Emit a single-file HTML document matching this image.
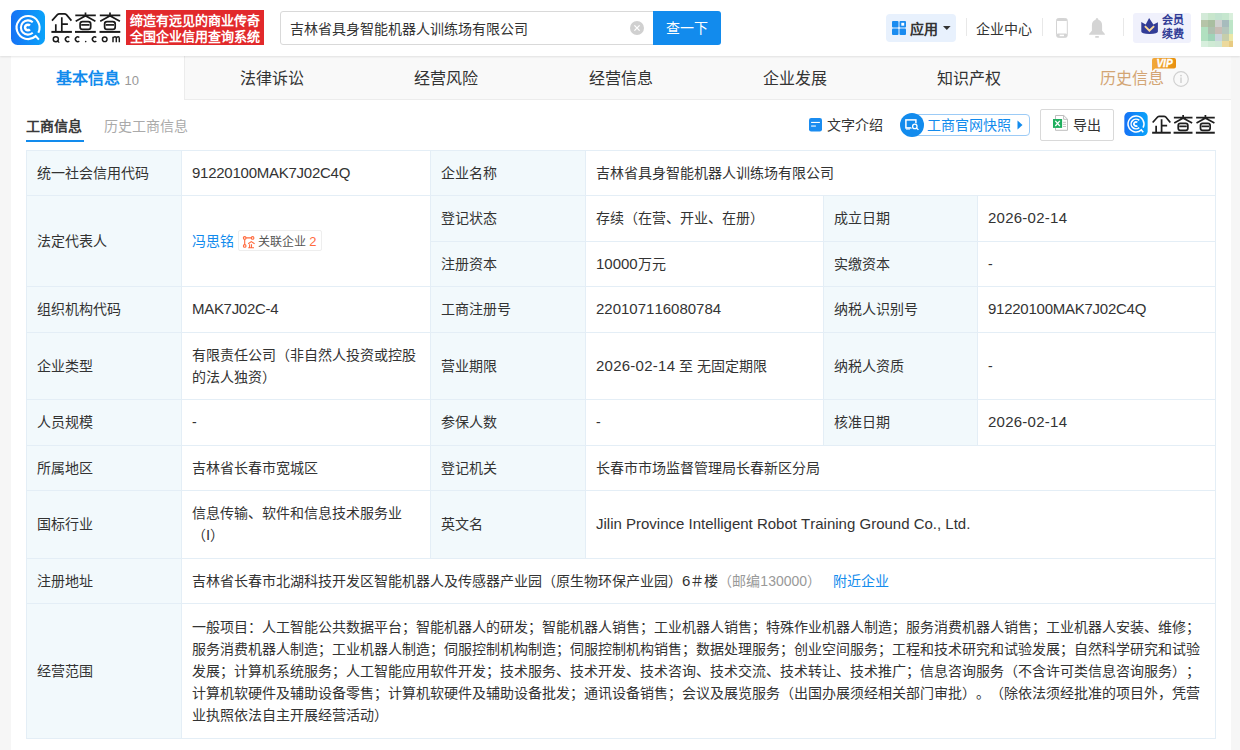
<!DOCTYPE html>
<html lang="zh-CN"><head><meta charset="utf-8">
<style>
*{margin:0;padding:0;box-sizing:border-box;}
html,body{text-spacing-trim:space-all;font-kerning:none;width:1240px;height:750px;overflow:hidden;background:#f6f6f6;font-family:"Liberation Sans",sans-serif;color:#333;}
.abs{position:absolute;}
svg{position:absolute;overflow:visible;}
#hdr{position:absolute;left:0;top:0;width:1240px;height:56px;background:#fff;box-shadow:0 1px 2px rgba(0,0,0,0.10);z-index:5;}
#card{position:absolute;left:11px;top:56px;width:1220px;height:700px;background:#fff;}
.tb{position:absolute;top:68px;font-size:16px;line-height:22px;color:#333;white-space:nowrap;}
.t{position:absolute;white-space:nowrap;font-size:14px;line-height:22px;color:#333;}
.c{position:absolute;display:flex;align-items:center;}
.ct{padding-left:11px;font-size:14px;line-height:22px;white-space:nowrap;color:#333;}
.num{font-family:"Liberation Sans",sans-serif;font-size:15px;}
.hl{position:absolute;height:1px;background:#e4eef6;}
.vl{position:absolute;width:1px;background:#e4eef6;}
</style></head>
<body>
<div id="hdr">
  <!-- logo icon -->
  <svg style="left:11px;top:10px" width="34" height="35" viewBox="0 0 34 35">
    <defs><linearGradient id="lg1" x1="0" y1="0" x2="1" y2="0"><stop offset="0" stop-color="#1672f5"/><stop offset="1" stop-color="#0aa3fa"/></linearGradient></defs>
    <rect x="0" y="0" width="34" height="35" rx="6.5" fill="url(#lg1)"/>
    <g fill="none" stroke="#fff" stroke-width="2.1">
      <path d="M27.34 22.77 A11.5 11.5 0 1 0 24.76 26.12 L27.9 29.6"/>
      <path d="M21.75 12.22 A7.1 7.1 0 1 0 21.75 22.78"/>
      <path d="M18.9 15.6 A2.8 2.8 0 1 0 18.9 19.4" stroke-width="2.5"/>
    </g>
  </svg>
  <!-- logo text -->
  <svg style="left:48px;top:8px" width="76" height="38" viewBox="0 0 76 38">
    <g fill="none" stroke="#1a1a1a" stroke-width="1.7" stroke-linecap="butt">
      <path d="M4 12.6 L9.4 6.6 Q10.2 5.8 11.4 5.8 L16.4 5.8 Q17.6 5.8 18.4 6.6 L23.4 12.6"/>
      <path d="M13.8 9.2 V23.4 M13.8 16.1 H19.9 M7.8 16.2 V23.4"/>
      <path d="M3.4 23.9 H23.9" stroke-width="2"/>
      <g id="cha">
        <path d="M27.3 7.3 H47.8 M37.5 4.4 V8.2 M37.2 8 L27.7 13.2 M37.8 8 L47.4 13.2"/>
        <rect x="32.1" y="13.6" width="10.6" height="7.7" rx="2.4"/>
        <path d="M33.2 16.9 H41.5"/>
        <path d="M27 23.9 H47.8" stroke-width="2"/>
      </g>
      <use href="#cha" x="24.5"/>
      <!-- Qcc.com -->
      <g stroke-width="1.45">
        <circle cx="7.8" cy="31.2" r="2.55"/>
        <path d="M9.2 32.6 L11.2 34.6" stroke-width="1.3"/>
        <path d="M21.3 29.6 A2.3 2.3 0 1 0 21.3 32.9"/>
        <path d="M31.3 29.6 A2.3 2.3 0 1 0 31.3 32.9"/>
        <path d="M48.3 29.6 A2.3 2.3 0 1 0 48.3 32.9"/>
        <circle cx="56.7" cy="31.3" r="2.35"/>
        <path d="M65 34.3 V28.7 M65 30.2 Q65.8 28.7 67 28.7 Q68.3 28.7 68.3 30.4 V34.3 M68.3 30.2 Q69 28.7 70.2 28.7 Q71.3 28.7 71.3 30.4 V34.3"/>
      </g>
      <circle cx="37.7" cy="33.6" r="0.8" fill="#1f1f1f" stroke="none"/>
    </g>
  </svg>
  <div class="abs" style="left:126px;top:10px;width:138px;height:35px;background:#e2292b;color:#fff;font-weight:bold;font-size:13px;line-height:16px;padding:3px 0 0 4px;white-space:nowrap;">缔造有远见的商业传奇<br>全国企业信用查询系统</div>
  <!-- search -->
  <div class="abs" style="left:280px;top:11px;width:374px;height:34px;border:1px solid #d9d9d9;border-radius:3px 0 0 3px;"></div>
  <div class="abs" style="left:290px;top:18px;font-size:14px;line-height:22px;color:#333;white-space:nowrap;">吉林省具身智能机器人训练场有限公司</div>
  <svg style="left:630px;top:21px" width="14" height="14" viewBox="0 0 14 14"><circle cx="7" cy="7" r="7" fill="#d0d0d0"/><path d="M4.4 4.4 L9.6 9.6 M9.6 4.4 L4.4 9.6" stroke="#fff" stroke-width="1.3"/></svg>
  <div class="abs" style="left:653px;top:11px;width:68px;height:34px;background:#128bed;border-radius:0 3px 3px 0;color:#fff;font-size:14px;line-height:35px;text-align:center;">查一下</div>
  <!-- right -->
  <div class="abs" style="left:886px;top:14px;width:70px;height:28px;background:#e8f1fd;border-radius:4px;"></div>
  <svg style="left:892px;top:21px" width="14" height="14" viewBox="0 0 14 14">
    <rect x="0" y="0" width="6.5" height="6.5" rx="1" fill="#1a8cf0"/>
    <rect x="7.5" y="0" width="6.5" height="6.5" rx="1" fill="#1a8cf0"/>
    <rect x="9.3" y="1.8" width="2.9" height="2.9" fill="#fff"/>
    <rect x="0" y="7.5" width="6.5" height="6.5" rx="1" fill="#1a8cf0"/>
    <rect x="7.5" y="7.5" width="6.5" height="6.5" rx="1" fill="#1a8cf0"/>
  </svg>
  <div class="abs" style="left:910px;top:18px;font-size:14px;line-height:22px;font-weight:bold;color:#333;">应用</div>
  <svg style="left:943px;top:26px" width="8" height="4" viewBox="0 0 8 4"><path d="M0 0 H7.6 L3.8 3.9 Z" fill="#333"/></svg>
  <div class="abs" style="left:966px;top:18px;width:1px;height:18px;background:#e8e8e8;"></div>
  <div class="abs" style="left:976px;top:18px;font-size:14px;line-height:22px;color:#333;">企业中心</div>
  <div class="abs" style="left:1042px;top:18px;width:1px;height:18px;background:#e8e8e8;"></div>
  <svg style="left:1056px;top:18px" width="12" height="20" viewBox="0 0 12 20">
    <rect x="0.5" y="0.5" width="10.8" height="18.8" rx="2.6" fill="none" stroke="#d4d4d4" stroke-width="1"/>
    <rect x="0.5" y="0.5" width="10.8" height="2.4" rx="1" fill="#d4d4d4"/>
    <rect x="0.5" y="15.4" width="10.8" height="4" rx="1.5" fill="#d4d4d4"/>
    <rect x="3.6" y="16.7" width="4.4" height="1.5" fill="#fff"/>
  </svg>
  <svg style="left:1089px;top:18px" width="16" height="20" viewBox="0 0 16 20">
    <path d="M8 0 C8.8 0 9.2 0.8 9.4 1.7 C11.8 2.4 13.1 4.5 13.1 7.2 V12.8 L15.9 16 V16.8 H0.1 V16 L2.9 12.8 V7.2 C2.9 4.5 4.2 2.4 6.6 1.7 C6.8 0.8 7.2 0 8 0 Z" fill="#d4d4d4"/>
    <rect x="6.2" y="18" width="3.7" height="1.7" rx="0.5" fill="#d4d4d4"/>
  </svg>
  <div class="abs" style="left:1123px;top:18px;width:1px;height:18px;background:#e8e8e8;"></div>
  <div class="abs" style="left:1133px;top:13px;width:58px;height:30px;background:#f0f1fc;border-radius:3px;"></div>
  <svg style="left:1141px;top:18.4px" width="17" height="16" viewBox="0 0 17 16">
    <path d="M0.3 3.9 L4.7 6.6 L8.1 0 L12.4 6.6 L16.9 4.2 V13.6 Q16.9 16 8.6 16 Q0.3 16 0.3 13.6 Z" fill="#323c96"/>
    <path d="M3.9 8.1 L8.4 12.6 L13.1 8.1" fill="none" stroke="#fcd99a" stroke-width="2"/>
  </svg>
  <div class="abs" style="left:1162px;top:14px;font-size:11px;line-height:13.5px;font-weight:bold;color:#323c96;white-space:nowrap;">会员<br>续费</div>
  <!-- avatar -->
  <div class="abs" style="left:1201px;top:13px;width:32px;height:34px;display:grid;grid-template-columns:7px 7px 7px 7px 4px;grid-template-rows:7px 7px 7px 7px 6px;filter:blur(0.4px);">
    <div style="background:#d3ead8"></div><div style="background:#c8e6cc"></div><div style="background:#c2e3cf"></div><div style="background:#c6e7cf"></div><div style="background:#d9efdc"></div>
    <div style="background:#b6c4a8"></div><div style="background:#a9bea0"></div><div style="background:#cfd0cf"></div><div style="background:#a7bcbd"></div><div style="background:#bde5c7"></div>
    <div style="background:#b1e0c0"></div><div style="background:#adbfaf"></div><div style="background:#c7bcb5"></div><div style="background:#b4c6bc"></div><div style="background:#bde5c7"></div>
    <div style="background:#b1e0c0"></div><div style="background:#9fd3b8"></div><div style="background:#c9d4dc"></div><div style="background:#c6ceab"></div><div style="background:#ebe7a8"></div>
    <div style="background:#d7efdd"></div><div style="background:#cfead4"></div><div style="background:#cfe6d6"></div><div style="background:#ecd99c"></div><div style="background:#e8cb82"></div>
  </div>
</div>

<div id="card">
  <div class="abs" style="left:0;top:0;width:1220px;height:44px;background:#f9f9f9;border-bottom:1px solid #ececec;"></div>
  <div class="abs" style="left:0;top:0;width:174px;height:44px;background:#fff;border-right:1px solid #ececec;"></div>
</div>

<!-- tabs -->
<div class="tb" style="left:56px;color:#128bed;font-weight:bold;">基本信息 <span style="font-size:13px;color:#999;font-weight:normal;position:relative;top:1px;">10</span></div>
<div class="tb" style="left:240px;">法律诉讼</div>
<div class="tb" style="left:414px;">经营风险</div>
<div class="tb" style="left:589px;">经营信息</div>
<div class="tb" style="left:763px;">企业发展</div>
<div class="tb" style="left:937px;">知识产权</div>
<div class="tb" style="left:1100px;color:#d3a574;">历史信息</div>
<svg style="left:1152px;top:58px" width="24" height="13" viewBox="0 0 24 13">
  <defs><linearGradient id="vg" x1="0" y1="0" x2="1" y2="0"><stop offset="0" stop-color="#f2a93b"/><stop offset="1" stop-color="#e8900f"/></linearGradient></defs>
  <path d="M2 0 H22 Q24 0 24 2 V8.6 Q24 10.6 22 10.6 H3 L0 13 V2 Q0 0 2 0 Z" fill="url(#vg)"/>
  <text x="12.5" y="9" text-anchor="middle" font-family="Liberation Sans" font-weight="bold" font-style="italic" font-size="10" fill="#fff" stroke="#fff" stroke-width="0.35">VIP</text>
</svg>
<svg style="left:1173px;top:71px" width="16" height="16" viewBox="0 0 16 16">
  <circle cx="8" cy="8" r="7.3" fill="none" stroke="#d0d0d0" stroke-width="1.2"/>
  <circle cx="8" cy="4.6" r="0.9" fill="#cfcfcf"/>
  <rect x="7.3" y="6.4" width="1.4" height="5.6" fill="#cfcfcf"/>
</svg>

<!-- subtabs -->
<div class="t" style="left:26px;top:115px;font-weight:bold;color:#3a3a3a;">工商信息</div>
<div class="abs" style="left:26px;top:140px;width:58px;height:2px;background:#128bed;"></div>
<div class="t" style="left:104px;top:115px;color:#aaa;">历史工商信息</div>

<svg style="left:809px;top:118px" width="13" height="14" viewBox="0 0 13 14">
  <rect x="0" y="0" width="13" height="13.4" rx="2.2" fill="#1a8cf0"/>
  <rect x="2.1" y="3.9" width="8.8" height="1.1" fill="#fff"/>
  <rect x="2.1" y="7.5" width="4.8" height="1.1" fill="#fff"/>
</svg>
<div class="t" style="left:827px;top:114px;">文字介绍</div>
<div class="abs" style="left:905px;top:114px;width:125px;height:22px;border:1px solid #9ccbf6;border-radius:4px;"></div>
<svg style="left:900px;top:113px" width="24" height="24" viewBox="0 0 24 24">
  <circle cx="12" cy="12" r="12" fill="#128bed"/>
  <rect x="5.9" y="6.9" width="10" height="8" fill="none" stroke="#fff" stroke-width="1.5"/>
  <path d="M6 16 H10" stroke="#fff" stroke-width="1.1"/>
  <circle cx="14.8" cy="13.6" r="3.6" fill="#128bed"/><circle cx="14.8" cy="13.4" r="2.2" fill="#128bed" stroke="#fff" stroke-width="1.3"/>
  <path d="M16.5 15 L18.4 16.9" stroke="#fff" stroke-width="1.3"/>
</svg>
<div class="t" style="left:927px;top:114px;color:#128bed;">工商官网快照</div>
<svg style="left:1017px;top:120px" width="6" height="10" viewBox="0 0 6 10"><path d="M0.5 0.5 L5.5 5 L0.5 9.5 Z" fill="#128bed"/></svg>

<div class="abs" style="left:1040px;top:109px;width:74px;height:32px;border:1px solid #d9d9d9;border-radius:2px;"></div>
<svg style="left:1053px;top:115px" width="16" height="16" viewBox="0 0 16 16">
  <path d="M2.5 0.5 H10.8 L14.5 4.2 V15.3 H2.5 Z" fill="#fff" stroke="#bdbdbd" stroke-width="1"/>
  <path d="M10.6 0.6 V4.3 H14.4" fill="none" stroke="#bdbdbd" stroke-width="1"/>
  <rect x="0" y="4" width="9.1" height="8.9" fill="#1fae5e"/>
  <path d="M2.3 5.9 L6.8 11 M6.8 5.9 L2.3 11" stroke="#fff" stroke-width="1.3"/>
  <path d="M10 7.3 H13 M10 9.4 H13 M10 11.5 H13" stroke="#bdbdbd" stroke-width="0.9"/>
</svg>
<div class="t" style="left:1073px;top:114px;">导出</div>
<!-- small logo -->
<svg style="left:1124px;top:112px" width="24" height="24" viewBox="0 0 34 35">
  <rect x="0" y="0" width="34" height="35" rx="7" fill="url(#lg1)"/>
  <g fill="none" stroke="#fff" stroke-width="2.2">
    <path d="M27.34 22.77 A11.6 11.6 0 1 0 24.76 26.12 L27.6 29.4"/>
    <path d="M21.75 12.22 A7.1 7.1 0 1 0 21.75 22.78"/>
    <path d="M19.0 15.27 A3 3 0 1 0 19.0 19.73" stroke-width="2.4"/>
  </g>
</svg>
<svg style="left:1148.7px;top:110.8px" width="70" height="24" viewBox="0 0 76.9 26.4">
  <g fill="none" stroke="#1f1f1f" stroke-width="1.9">
    <path d="M4 12.6 L9.4 6.6 Q10.2 5.8 11.4 5.8 L16.4 5.8 Q17.6 5.8 18.4 6.6 L23.4 12.6"/>
    <path d="M13.8 9.2 V23.4 M13.8 16.1 H19.9 M7.8 16.2 V23.4"/>
    <path d="M3.4 23.9 H23.9" stroke-width="2.2"/>
    <g id="cha2">
      <path d="M27.3 7.3 H47.8 M37.5 4.4 V8.2 M37.2 8 L27.7 13.2 M37.8 8 L47.4 13.2"/>
      <rect x="32.1" y="13.6" width="10.6" height="7.7" rx="2.4"/>
      <path d="M33.2 16.9 H41.5"/>
      <path d="M27 23.9 H47.8" stroke-width="2.2"/>
    </g>
    <use href="#cha2" x="24.5"/>
  </g>
</svg>
<div class="c" style="left:26px;top:150px;width:155px;height:45px;background:#f2f9fc"><div class="ct">统一社会信用代码</div></div>
<div class="c" style="left:181px;top:150px;width:249px;height:45px;background:#fff"><div class="ct"><span class="num" style="letter-spacing:-0.25px">91220100MAK7J02C4Q</span></div></div>
<div class="c" style="left:430px;top:150px;width:155px;height:45px;background:#f2f9fc"><div class="ct">企业名称</div></div>
<div class="c" style="left:585px;top:150px;width:630px;height:45px;background:#fff"><div class="ct">吉林省具身智能机器人训练场有限公司</div></div>
<div class="c" style="left:26px;top:195px;width:155px;height:91px;background:#f2f9fc"><div class="ct">法定代表人</div></div>
<div class="c" style="left:181px;top:195px;width:249px;height:91px;background:#fff"></div>
<div class="t" style="left:192px;top:230px;color:#128bed">冯思铭</div>
<div class="abs" style="left:238px;top:230px;width:84px;height:21px;border:1px solid #eee;border-radius:2px;"></div>
<svg style="left:243px;top:235.5px" width="13" height="13" viewBox="0 0 13 13"><g fill="none" stroke="#ff6a3d" stroke-width="1.1"><circle cx="1.7" cy="1.9" r="1.3"/><circle cx="9.6" cy="1.9" r="1.3"/><circle cx="1.7" cy="9.9" r="1.3"/><path d="M3 1.9 H8.3 M1.7 3.2 V8.6"/><path d="M5.2 7.8 L8.3 5.6 L11.6 7.8 M6.6 8.3 V11.6 M8.5 8.3 V11.6 M5.2 11.8 H11"/></g></svg>
<div class="abs" style="left:258px;top:233px;font-size:12px;line-height:17px;color:#555;white-space:nowrap;">关联企业 <span style="color:#ff6a3d;font-size:13px;">2</span></div>
<div class="c" style="left:430px;top:195px;width:155px;height:46px;background:#f2f9fc"><div class="ct">登记状态</div></div>
<div class="c" style="left:585px;top:195px;width:238px;height:46px;background:#fff"><div class="ct">存续（在营、开业、在册）</div></div>
<div class="c" style="left:823px;top:195px;width:154px;height:46px;background:#f2f9fc"><div class="ct">成立日期</div></div>
<div class="c" style="left:977px;top:195px;width:238px;height:46px;background:#fff"><div class="ct"><span class="num" style="letter-spacing:0.25px">2026-02-14</span></div></div>
<div class="c" style="left:430px;top:241px;width:155px;height:45px;background:#f2f9fc"><div class="ct">注册资本</div></div>
<div class="c" style="left:585px;top:241px;width:238px;height:45px;background:#fff"><div class="ct"><span class="num">10000</span>万元</div></div>
<div class="c" style="left:823px;top:241px;width:154px;height:45px;background:#f2f9fc"><div class="ct">实缴资本</div></div>
<div class="c" style="left:977px;top:241px;width:238px;height:45px;background:#fff"><div class="ct">-</div></div>
<div class="c" style="left:26px;top:286px;width:155px;height:46px;background:#f2f9fc"><div class="ct">组织机构代码</div></div>
<div class="c" style="left:181px;top:286px;width:249px;height:46px;background:#fff"><div class="ct"><span class="num" style="letter-spacing:-0.3px">MAK7J02C-4</span></div></div>
<div class="c" style="left:430px;top:286px;width:155px;height:46px;background:#f2f9fc"><div class="ct">工商注册号</div></div>
<div class="c" style="left:585px;top:286px;width:238px;height:46px;background:#fff"><div class="ct"><span class="num">220107116080784</span></div></div>
<div class="c" style="left:823px;top:286px;width:154px;height:46px;background:#f2f9fc"><div class="ct">纳税人识别号</div></div>
<div class="c" style="left:977px;top:286px;width:238px;height:46px;background:#fff"><div class="ct"><span class="num" style="letter-spacing:-0.25px">91220100MAK7J02C4Q</span></div></div>
<div class="c" style="left:26px;top:332px;width:155px;height:67px;background:#f2f9fc"><div class="ct">企业类型</div></div>
<div class="c" style="left:181px;top:332px;width:249px;height:67px;background:#fff"><div class="ct">有限责任公司（非自然人投资或控股<br>的法人独资）</div></div>
<div class="c" style="left:430px;top:332px;width:155px;height:67px;background:#f2f9fc"><div class="ct">营业期限</div></div>
<div class="c" style="left:585px;top:332px;width:238px;height:67px;background:#fff"><div class="ct"><span class="num" style="letter-spacing:0.25px">2026-02-14</span> 至 无固定期限</div></div>
<div class="c" style="left:823px;top:332px;width:154px;height:67px;background:#f2f9fc"><div class="ct">纳税人资质</div></div>
<div class="c" style="left:977px;top:332px;width:238px;height:67px;background:#fff"><div class="ct">-</div></div>
<div class="c" style="left:26px;top:399px;width:155px;height:46px;background:#f2f9fc"><div class="ct">人员规模</div></div>
<div class="c" style="left:181px;top:399px;width:249px;height:46px;background:#fff"><div class="ct">-</div></div>
<div class="c" style="left:430px;top:399px;width:155px;height:46px;background:#f2f9fc"><div class="ct">参保人数</div></div>
<div class="c" style="left:585px;top:399px;width:238px;height:46px;background:#fff"><div class="ct">-</div></div>
<div class="c" style="left:823px;top:399px;width:154px;height:46px;background:#f2f9fc"><div class="ct">核准日期</div></div>
<div class="c" style="left:977px;top:399px;width:238px;height:46px;background:#fff"><div class="ct"><span class="num" style="letter-spacing:0.25px">2026-02-14</span></div></div>
<div class="c" style="left:26px;top:445px;width:155px;height:45px;background:#f2f9fc"><div class="ct">所属地区</div></div>
<div class="c" style="left:181px;top:445px;width:249px;height:45px;background:#fff"><div class="ct">吉林省长春市宽城区</div></div>
<div class="c" style="left:430px;top:445px;width:155px;height:45px;background:#f2f9fc"><div class="ct">登记机关</div></div>
<div class="c" style="left:585px;top:445px;width:630px;height:45px;background:#fff"><div class="ct">长春市市场监督管理局长春新区分局</div></div>
<div class="c" style="left:26px;top:490px;width:155px;height:68px;background:#f2f9fc"><div class="ct">国标行业</div></div>
<div class="c" style="left:181px;top:490px;width:249px;height:68px;background:#fff"><div class="ct">信息传输、软件和信息技术服务业<br>（<span class="num">I</span>）</div></div>
<div class="c" style="left:430px;top:490px;width:155px;height:68px;background:#f2f9fc"><div class="ct">英文名</div></div>
<div class="c" style="left:585px;top:490px;width:630px;height:68px;background:#fff"><div class="ct"><span class="num">Jilin Province Intelligent Robot Training Ground Co., Ltd.</span></div></div>
<div class="c" style="left:26px;top:558px;width:155px;height:45px;background:#f2f9fc"><div class="ct">注册地址</div></div>
<div class="c" style="left:181px;top:558px;width:1034px;height:45px;background:#fff"><div class="ct">吉林省长春市北湖科技开发区智能机器人及传感器产业园（原生物环保产业园）<span class="num">6</span>＃楼<span style="color:#999">（邮编<span class="num" style="font-size:14px">130000</span>）</span><span style="color:#128bed;margin-left:12px">附近企业</span></div></div>
<div class="c" style="left:26px;top:603px;width:155px;height:135px;background:#f2f9fc"><div class="ct">经营范围</div></div>
<div class="c" style="left:181px;top:603px;width:1034px;height:135px;background:#fff"><div class="ct">一般项目：人工智能公共数据平台；智能机器人的研发；智能机器人销售；工业机器人销售；特殊作业机器人制造；服务消费机器人销售；工业机器人安装、维修；<br>服务消费机器人制造；工业机器人制造；伺服控制机构制造；伺服控制机构销售；数据处理服务；创业空间服务；工程和技术研究和试验发展；自然科学研究和试验<br>发展；计算机系统服务；人工智能应用软件开发；技术服务、技术开发、技术咨询、技术交流、技术转让、技术推广；信息咨询服务（不含许可类信息咨询服务）；<br>计算机软硬件及辅助设备零售；计算机软硬件及辅助设备批发；通讯设备销售；会议及展览服务（出国办展须经相关部门审批）。（除依法须经批准的项目外，凭营<br>业执照依法自主开展经营活动）</div></div>
<div class="hl" style="left:26px;top:150px;width:156px"></div>
<div class="hl" style="left:26px;top:195px;width:156px"></div>
<div class="vl" style="left:26px;top:150px;height:46px"></div>
<div class="vl" style="left:181px;top:150px;height:46px"></div>
<div class="hl" style="left:181px;top:150px;width:250px"></div>
<div class="hl" style="left:181px;top:195px;width:250px"></div>
<div class="vl" style="left:181px;top:150px;height:46px"></div>
<div class="vl" style="left:430px;top:150px;height:46px"></div>
<div class="hl" style="left:430px;top:150px;width:156px"></div>
<div class="hl" style="left:430px;top:195px;width:156px"></div>
<div class="vl" style="left:430px;top:150px;height:46px"></div>
<div class="vl" style="left:585px;top:150px;height:46px"></div>
<div class="hl" style="left:585px;top:150px;width:631px"></div>
<div class="hl" style="left:585px;top:195px;width:631px"></div>
<div class="vl" style="left:585px;top:150px;height:46px"></div>
<div class="vl" style="left:1215px;top:150px;height:46px"></div>
<div class="hl" style="left:26px;top:195px;width:156px"></div>
<div class="hl" style="left:26px;top:286px;width:156px"></div>
<div class="vl" style="left:26px;top:195px;height:92px"></div>
<div class="vl" style="left:181px;top:195px;height:92px"></div>
<div class="hl" style="left:181px;top:195px;width:250px"></div>
<div class="hl" style="left:181px;top:286px;width:250px"></div>
<div class="vl" style="left:181px;top:195px;height:92px"></div>
<div class="vl" style="left:430px;top:195px;height:92px"></div>
<div class="hl" style="left:430px;top:195px;width:156px"></div>
<div class="hl" style="left:430px;top:241px;width:156px"></div>
<div class="vl" style="left:430px;top:195px;height:47px"></div>
<div class="vl" style="left:585px;top:195px;height:47px"></div>
<div class="hl" style="left:585px;top:195px;width:239px"></div>
<div class="hl" style="left:585px;top:241px;width:239px"></div>
<div class="vl" style="left:585px;top:195px;height:47px"></div>
<div class="vl" style="left:823px;top:195px;height:47px"></div>
<div class="hl" style="left:823px;top:195px;width:155px"></div>
<div class="hl" style="left:823px;top:241px;width:155px"></div>
<div class="vl" style="left:823px;top:195px;height:47px"></div>
<div class="vl" style="left:977px;top:195px;height:47px"></div>
<div class="hl" style="left:977px;top:195px;width:239px"></div>
<div class="hl" style="left:977px;top:241px;width:239px"></div>
<div class="vl" style="left:977px;top:195px;height:47px"></div>
<div class="vl" style="left:1215px;top:195px;height:47px"></div>
<div class="hl" style="left:430px;top:241px;width:156px"></div>
<div class="hl" style="left:430px;top:286px;width:156px"></div>
<div class="vl" style="left:430px;top:241px;height:46px"></div>
<div class="vl" style="left:585px;top:241px;height:46px"></div>
<div class="hl" style="left:585px;top:241px;width:239px"></div>
<div class="hl" style="left:585px;top:286px;width:239px"></div>
<div class="vl" style="left:585px;top:241px;height:46px"></div>
<div class="vl" style="left:823px;top:241px;height:46px"></div>
<div class="hl" style="left:823px;top:241px;width:155px"></div>
<div class="hl" style="left:823px;top:286px;width:155px"></div>
<div class="vl" style="left:823px;top:241px;height:46px"></div>
<div class="vl" style="left:977px;top:241px;height:46px"></div>
<div class="hl" style="left:977px;top:241px;width:239px"></div>
<div class="hl" style="left:977px;top:286px;width:239px"></div>
<div class="vl" style="left:977px;top:241px;height:46px"></div>
<div class="vl" style="left:1215px;top:241px;height:46px"></div>
<div class="hl" style="left:26px;top:286px;width:156px"></div>
<div class="hl" style="left:26px;top:332px;width:156px"></div>
<div class="vl" style="left:26px;top:286px;height:47px"></div>
<div class="vl" style="left:181px;top:286px;height:47px"></div>
<div class="hl" style="left:181px;top:286px;width:250px"></div>
<div class="hl" style="left:181px;top:332px;width:250px"></div>
<div class="vl" style="left:181px;top:286px;height:47px"></div>
<div class="vl" style="left:430px;top:286px;height:47px"></div>
<div class="hl" style="left:430px;top:286px;width:156px"></div>
<div class="hl" style="left:430px;top:332px;width:156px"></div>
<div class="vl" style="left:430px;top:286px;height:47px"></div>
<div class="vl" style="left:585px;top:286px;height:47px"></div>
<div class="hl" style="left:585px;top:286px;width:239px"></div>
<div class="hl" style="left:585px;top:332px;width:239px"></div>
<div class="vl" style="left:585px;top:286px;height:47px"></div>
<div class="vl" style="left:823px;top:286px;height:47px"></div>
<div class="hl" style="left:823px;top:286px;width:155px"></div>
<div class="hl" style="left:823px;top:332px;width:155px"></div>
<div class="vl" style="left:823px;top:286px;height:47px"></div>
<div class="vl" style="left:977px;top:286px;height:47px"></div>
<div class="hl" style="left:977px;top:286px;width:239px"></div>
<div class="hl" style="left:977px;top:332px;width:239px"></div>
<div class="vl" style="left:977px;top:286px;height:47px"></div>
<div class="vl" style="left:1215px;top:286px;height:47px"></div>
<div class="hl" style="left:26px;top:332px;width:156px"></div>
<div class="hl" style="left:26px;top:399px;width:156px"></div>
<div class="vl" style="left:26px;top:332px;height:68px"></div>
<div class="vl" style="left:181px;top:332px;height:68px"></div>
<div class="hl" style="left:181px;top:332px;width:250px"></div>
<div class="hl" style="left:181px;top:399px;width:250px"></div>
<div class="vl" style="left:181px;top:332px;height:68px"></div>
<div class="vl" style="left:430px;top:332px;height:68px"></div>
<div class="hl" style="left:430px;top:332px;width:156px"></div>
<div class="hl" style="left:430px;top:399px;width:156px"></div>
<div class="vl" style="left:430px;top:332px;height:68px"></div>
<div class="vl" style="left:585px;top:332px;height:68px"></div>
<div class="hl" style="left:585px;top:332px;width:239px"></div>
<div class="hl" style="left:585px;top:399px;width:239px"></div>
<div class="vl" style="left:585px;top:332px;height:68px"></div>
<div class="vl" style="left:823px;top:332px;height:68px"></div>
<div class="hl" style="left:823px;top:332px;width:155px"></div>
<div class="hl" style="left:823px;top:399px;width:155px"></div>
<div class="vl" style="left:823px;top:332px;height:68px"></div>
<div class="vl" style="left:977px;top:332px;height:68px"></div>
<div class="hl" style="left:977px;top:332px;width:239px"></div>
<div class="hl" style="left:977px;top:399px;width:239px"></div>
<div class="vl" style="left:977px;top:332px;height:68px"></div>
<div class="vl" style="left:1215px;top:332px;height:68px"></div>
<div class="hl" style="left:26px;top:399px;width:156px"></div>
<div class="hl" style="left:26px;top:445px;width:156px"></div>
<div class="vl" style="left:26px;top:399px;height:47px"></div>
<div class="vl" style="left:181px;top:399px;height:47px"></div>
<div class="hl" style="left:181px;top:399px;width:250px"></div>
<div class="hl" style="left:181px;top:445px;width:250px"></div>
<div class="vl" style="left:181px;top:399px;height:47px"></div>
<div class="vl" style="left:430px;top:399px;height:47px"></div>
<div class="hl" style="left:430px;top:399px;width:156px"></div>
<div class="hl" style="left:430px;top:445px;width:156px"></div>
<div class="vl" style="left:430px;top:399px;height:47px"></div>
<div class="vl" style="left:585px;top:399px;height:47px"></div>
<div class="hl" style="left:585px;top:399px;width:239px"></div>
<div class="hl" style="left:585px;top:445px;width:239px"></div>
<div class="vl" style="left:585px;top:399px;height:47px"></div>
<div class="vl" style="left:823px;top:399px;height:47px"></div>
<div class="hl" style="left:823px;top:399px;width:155px"></div>
<div class="hl" style="left:823px;top:445px;width:155px"></div>
<div class="vl" style="left:823px;top:399px;height:47px"></div>
<div class="vl" style="left:977px;top:399px;height:47px"></div>
<div class="hl" style="left:977px;top:399px;width:239px"></div>
<div class="hl" style="left:977px;top:445px;width:239px"></div>
<div class="vl" style="left:977px;top:399px;height:47px"></div>
<div class="vl" style="left:1215px;top:399px;height:47px"></div>
<div class="hl" style="left:26px;top:445px;width:156px"></div>
<div class="hl" style="left:26px;top:490px;width:156px"></div>
<div class="vl" style="left:26px;top:445px;height:46px"></div>
<div class="vl" style="left:181px;top:445px;height:46px"></div>
<div class="hl" style="left:181px;top:445px;width:250px"></div>
<div class="hl" style="left:181px;top:490px;width:250px"></div>
<div class="vl" style="left:181px;top:445px;height:46px"></div>
<div class="vl" style="left:430px;top:445px;height:46px"></div>
<div class="hl" style="left:430px;top:445px;width:156px"></div>
<div class="hl" style="left:430px;top:490px;width:156px"></div>
<div class="vl" style="left:430px;top:445px;height:46px"></div>
<div class="vl" style="left:585px;top:445px;height:46px"></div>
<div class="hl" style="left:585px;top:445px;width:631px"></div>
<div class="hl" style="left:585px;top:490px;width:631px"></div>
<div class="vl" style="left:585px;top:445px;height:46px"></div>
<div class="vl" style="left:1215px;top:445px;height:46px"></div>
<div class="hl" style="left:26px;top:490px;width:156px"></div>
<div class="hl" style="left:26px;top:558px;width:156px"></div>
<div class="vl" style="left:26px;top:490px;height:69px"></div>
<div class="vl" style="left:181px;top:490px;height:69px"></div>
<div class="hl" style="left:181px;top:490px;width:250px"></div>
<div class="hl" style="left:181px;top:558px;width:250px"></div>
<div class="vl" style="left:181px;top:490px;height:69px"></div>
<div class="vl" style="left:430px;top:490px;height:69px"></div>
<div class="hl" style="left:430px;top:490px;width:156px"></div>
<div class="hl" style="left:430px;top:558px;width:156px"></div>
<div class="vl" style="left:430px;top:490px;height:69px"></div>
<div class="vl" style="left:585px;top:490px;height:69px"></div>
<div class="hl" style="left:585px;top:490px;width:631px"></div>
<div class="hl" style="left:585px;top:558px;width:631px"></div>
<div class="vl" style="left:585px;top:490px;height:69px"></div>
<div class="vl" style="left:1215px;top:490px;height:69px"></div>
<div class="hl" style="left:26px;top:558px;width:156px"></div>
<div class="hl" style="left:26px;top:603px;width:156px"></div>
<div class="vl" style="left:26px;top:558px;height:46px"></div>
<div class="vl" style="left:181px;top:558px;height:46px"></div>
<div class="hl" style="left:181px;top:558px;width:1035px"></div>
<div class="hl" style="left:181px;top:603px;width:1035px"></div>
<div class="vl" style="left:181px;top:558px;height:46px"></div>
<div class="vl" style="left:1215px;top:558px;height:46px"></div>
<div class="hl" style="left:26px;top:603px;width:156px"></div>
<div class="hl" style="left:26px;top:738px;width:156px"></div>
<div class="vl" style="left:26px;top:603px;height:136px"></div>
<div class="vl" style="left:181px;top:603px;height:136px"></div>
<div class="hl" style="left:181px;top:603px;width:1035px"></div>
<div class="hl" style="left:181px;top:738px;width:1035px"></div>
<div class="vl" style="left:181px;top:603px;height:136px"></div>
<div class="vl" style="left:1215px;top:603px;height:136px"></div>
</body></html>
